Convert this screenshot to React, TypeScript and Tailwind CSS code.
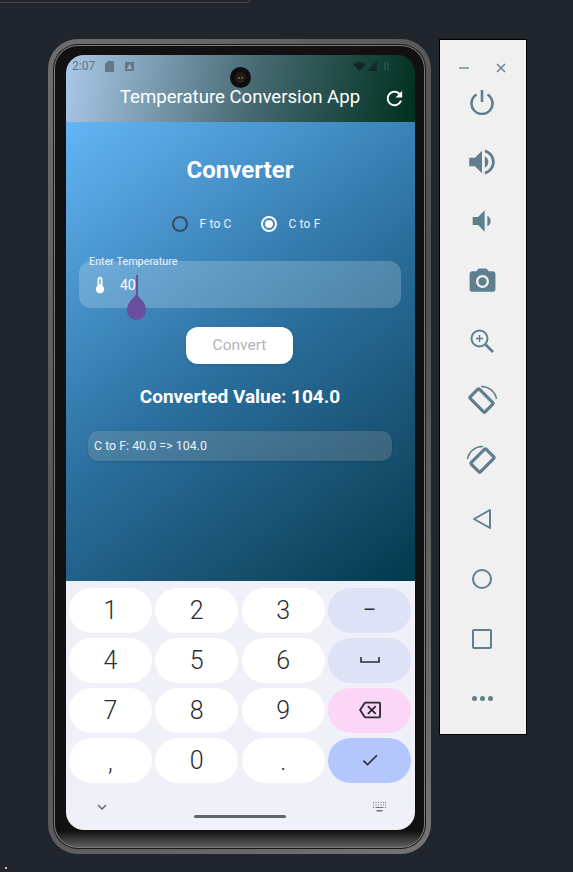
const font = { fontFamily: "Roboto, sans-serif" };

function Icon({ d, size = 24, className = "" }: { d: string; size?: number; className?: string }) {
  return (
    <svg width={size} height={size} viewBox="0 0 24 24" fill="currentColor" className={className}>
      <path d={d} />
    </svg>
  );
}

function Key({ label, className = "bg-white" }: { label?: string; className?: string }) {
  return (
    <div className={`flex h-[45.5px] items-center justify-center rounded-[23px] text-[25px] font-[350] text-[#2b2c33] ${className}`}>
      {label}
    </div>
  );
}

function Keyboard() {
  return (
    <div className="flex h-[249px] flex-col bg-[#f0f0f8] pt-[6.5px]">
      <div className="grid grid-cols-4 gap-x-[3.8px] gap-y-[4.5px] pl-[3px] pr-[4px]">
        <Key label="1" />
        <Key label="2" />
        <Key label="3" />
        <div className="flex h-[45.5px] items-center justify-center rounded-[23px] bg-[#dde2f7] text-[20px] font-normal text-[#2b2c33]">–</div>
        <Key label="4" />
        <Key label="5" />
        <Key label="6" />
        <div className="flex h-[45.5px] items-center justify-center rounded-[23px] bg-[#dde2f7]">
          <svg width="20" height="8" viewBox="0 0 20 8" fill="none" stroke="#2b2c33" strokeWidth="1.6">
            <path d="M1 1v5h18V1" />
          </svg>
        </div>
        <Key label="7" />
        <Key label="8" />
        <Key label="9" />
        <div className="flex h-[45.5px] items-center justify-center rounded-[23px] bg-[#fcd6f6] text-[#2b2c33]">
          <Icon size={22} d="M22 3H7c-.69 0-1.23.35-1.59.88L0 12l5.41 8.11c.36.53.9.89 1.59.89h15c1.1 0 2-.9 2-2V5c0-1.1-.9-2-2-2zm0 16H7.07L2.4 12l4.66-7H22v14zm-11.59-2L14 13.41 17.59 17 19 15.59 15.41 12 19 8.41 17.59 7 14 10.59 10.41 7 9 8.41 12.59 12 9 15.59z" />
        </div>
        <Key label="," className="bg-white pt-[3px]" />
        <Key label="0" />
        <Key label="." className="bg-white pt-[3px]" />
        <div className="flex h-[45.5px] items-center justify-center rounded-[23px] bg-[#b4c7fd] text-[#2b2c33]">
          <Icon size={20} d="M9 16.17L4.83 12l-1.42 1.41L9 19 21 7l-1.41-1.41z" />
        </div>
      </div>
      <div className="flex items-center justify-between pl-[30px] pr-[28px] pt-[19px]">
        <svg width="12" height="8" viewBox="0 0 12 8" fill="none" stroke="#5c5f68" strokeWidth="1.3">
          <path d="M2 2l4 4 4-4" />
        </svg>
        <svg width="15" height="10" viewBox="0 0 15 10" fill="#6f727a">
          <path d="M1 0h1v1H1zM3.500 0h1v1h-1zM6 0h1v1H6zM8.500 0h1v1h-1zM11 0h1v1h-1zM13 0h1v1h-1zM1 2.500h1v1H1zM3.500 2.500h1v1h-1zM6 2.500h1v1H6zM8.500 2.500h1v1h-1zM11 2.500h1v1h-1zM13 2.500h1v1h-1zM1 5h1v1H1zM3.500 5h8v1h-8zM13 5h1v1h-1zM4.500 8h6v1.500h-6z" />
        </svg>
      </div>
      <div className="ml-[128px] mt-[3px] h-[3px] w-[92px] rounded-full bg-[#64656c]" />
    </div>
  );
}

function AppBar() {
  return (
    <div className="relative h-[67px] bg-[linear-gradient(100deg,#aac8e8_0%,#44686f_55%,#00301f_100%)]">
      <div className="flex h-[21px] items-center justify-between pl-[6px] pr-[25px] pt-[1px] text-[#62778a]">
        <div className="flex items-center gap-[10px]">
          <span className="text-[12px]">2:07</span>
          <svg width="9" height="11" viewBox="0 0 9 11" fill="currentColor">
            <path d="M3 0h5a1 1 0 0 1 1 1v9a1 1 0 0 1-1 1H1a1 1 0 0 1-1-1V3z" />
          </svg>
          <svg width="9" height="9" viewBox="0 0 9 9" className="ml-[1px]">
            <path d="M0 0h9v9H0z" fill="currentColor" />
            <path d="M4.500 1.500L7 7H2z" fill="#b0c4d4" opacity="0.7" />
          </svg>
        </div>
        <div className="flex items-center gap-[1px] text-[#0d2a2c]">
          <svg width="13" height="9" viewBox="0 0 14 10" fill="currentColor">
            <path d="M0 2.500Q7-2.500 14 2.500L7 10z" />
          </svg>
          <svg width="10" height="10" viewBox="0 0 10 10" fill="currentColor">
            <path d="M10 0v10H0z" />
          </svg>
          <svg width="7" height="10" viewBox="0 0 7 10" fill="#24504c" className="ml-[5px]">
            <path d="M1 1h2v8H1zM4 1h2v8H4z" />
          </svg>
        </div>
      </div>
      <div className="relative flex h-[46px] items-center justify-center pb-[3px] pr-[1px]">
        <h2 className="text-[18.6px] leading-none text-white">Temperature Conversion App</h2>
        <Icon size={23} className="absolute right-[9.5px] top-[10.5px] text-white" d="M17.65 6.35C16.2 4.900 14.210 4 12 4c-4.420 0-7.990 3.580-7.990 8s3.570 8 7.990 8c3.730 0 6.840-2.550 7.730-6h-2.080c-.82 2.330-3.040 4-5.650 4-3.310 0-6-2.690-6-6s2.690-6 6-6c1.660 0 3.140.69 4.220 1.780L13 11h7V4l-2.350 2.350z" />
      </div>
      {/* punch-hole camera */}
      <div className="absolute left-[164px] top-[12px] flex h-[21px] w-[21px] items-center justify-center rounded-full bg-[#0e0e10]">
        <div className="flex h-[11px] w-[11px] items-center justify-center gap-[1px] rounded-full bg-[#221d18]">
          <div className="h-[2px] w-[2px] rounded-full bg-[#8a6a2c]" />
          <div className="h-[2px] w-[2px] rounded-full bg-[#8a6a2c]" />
        </div>
      </div>
    </div>
  );
}

function Radio({ label, selected }: { label: string; selected?: boolean }) {
  return (
    <div className="flex items-center gap-[12px]">
      {selected ? (
        <div className="flex h-[16px] w-[16px] items-center justify-center rounded-full border-2 border-white">
          <div className="h-[8px] w-[8px] rounded-full bg-white" />
        </div>
      ) : (
        <div className="h-[16px] w-[16px] rounded-full border-2 border-[#3f4a5e]" />
      )}
      <span className="text-[12px] leading-none tracking-[0.15px] text-white/90">{label}</span>
    </div>
  );
}

function Converter() {
  return (
    <div className="flex h-[459px] flex-col bg-[linear-gradient(143deg,#64b5f6_0%,#2b709f_50%,#174f6e_80%,#003a4c_100%)] pr-[1px] text-white">
      <h1 className="mt-[33px] text-center text-[24px] font-bold leading-[30px]">Converter</h1>
      <div className="mt-[31px] flex h-[16px] justify-center gap-[29px] pl-[12px]">
        <Radio label="F to C" />
        <Radio label="C to F" selected />
      </div>
      <div className="relative mx-[13px] mt-[29px] flex h-[47px] items-center rounded-[12px] bg-white/20 pl-[11px]">
        <span className="absolute left-[10px] top-[-6px] text-[10.8px] leading-[13px] text-white/90">Enter Temperature</span>
        <Icon size={20} className="text-white" d="M15 13V5c0-1.660-1.340-3-3-3S9 3.340 9 5v8c-1.210.91-2 2.370-2 4 0 2.760 2.240 5 5 5s5-2.240 5-5c0-1.630-.79-3.090-2-4zm-4-8c0-.55.45-1 1-1s1 .45 1 1h-1v1h1v2h-1v1h1v2h-2V5z" />
        <span className="ml-[10px] text-[14px] leading-none">40</span>
        {/* text cursor and its drag handle */}
        <div className="absolute left-[57px] top-[14px] h-[26px] w-[1.500px] bg-[#6a4ea0]" />
        <svg width="19" height="27" viewBox="0 0 19 27" className="absolute left-[47.500px] top-[32px]" fill="#6a4ea0">
          <path d="M9.500 0C11 5 19 8 19 17.500A9.500 9.500 0 0 1 0 17.500C0 8 8 5 9.500 0z" />
        </svg>
      </div>
      <button className="ml-[120px] mt-[19px] block h-[37px] w-[107px] rounded-[12px] bg-white pt-[1px] text-[15.5px] text-[#b3b3b8] shadow-sm">
        Convert
      </button>
      <p className="mt-[21px] text-center text-[19px] font-bold leading-[24px]">Converted Value: 104.0</p>
      <div className="mx-[22px] mt-[22px] flex h-[30px] items-center rounded-[10px] bg-[#c8c0b8]/20 pl-[6px] text-[12.4px] text-white/90 shadow-sm">
        C to F: 40.0 =&gt; 104.0
      </div>
    </div>
  );
}

function Phone() {
  return (
    <div className="h-[815px] w-[383px] shrink-0 rounded-[30px] bg-[linear-gradient(135deg,#6e6e6e,#4e4e4e_50%,#757575)] p-[5px]">
      <div className="h-full rounded-[25px] bg-[#1a1a1a] p-[1px]">
        <div className="h-full rounded-[24px] bg-[#7a7a7a] p-[1px]">
          <div className="h-full rounded-[23px] bg-[linear-gradient(180deg,#111111_98%,#5e5e5e_100%)] pb-[17px] pl-[11px] pr-[9px] pt-[9px]">
            <div className="h-[775px] overflow-hidden rounded-[18px]">
              <AppBar />
              <Converter />
              <Keyboard />
            </div>
          </div>
        </div>
      </div>
    </div>
  );
}

function Tool({ children }: { children: React.ReactNode }) {
  return <div className="flex h-[59.600px] items-center justify-center pr-[2px] text-[#5f7f8e]">{children}</div>;
}

function RotateIcon({ flip }: { flip?: boolean }) {
  return (
    <svg width="34" height="34" viewBox="0 0 34 34" fill="none" stroke="currentColor" className={flip ? "-scale-x-100" : ""}>
      <rect x="6" y="11" width="21" height="13" rx="1" strokeWidth="3.2" transform="rotate(45 16.500 17.500)" />
      <path d="M16 3.500A15 15 0 0 1 31.500 16" strokeWidth="1.600" />
    </svg>
  );
}

function EmulatorPanel() {
  return (
    <div className="ml-[8px] h-[696px] w-[88px] shrink-0 border border-black bg-[#f0f0f0]">
      <div className="flex h-[32.500px] items-end justify-between pl-[19px] pr-[20px] text-[#5f7f8e]">
        <svg width="10" height="10" viewBox="0 0 10 10" stroke="currentColor" strokeWidth="1.300">
          <path d="M0 5h10" />
        </svg>
        <svg width="10" height="10" viewBox="0 0 10 10" stroke="currentColor" strokeWidth="1.300">
          <path d="M1 1l8 8M9 1l-8 8" />
        </svg>
      </div>
      <Tool>
        <svg width="26" height="26" viewBox="0 0 26 26" fill="none" stroke="currentColor" strokeWidth="2.600">
          <path d="M13 1v12M7.500 5.500a10.500 10.500 0 1 0 11 0" />
        </svg>
      </Tool>
      <Tool>
        <Icon size={34} d="M3 9v6h4l5 5V4L7 9H3zm13.500 3c0-1.770-1.020-3.290-2.500-4.030v8.050c1.480-.73 2.500-2.250 2.500-4.020zM14 3.230v2.060c2.890.86 5 3.540 5 6.710s-2.110 5.850-5 6.710v2.060c4.010-.91 7-4.490 7-8.770s-2.990-7.860-7-8.770z" />
      </Tool>
      <Tool>
        <Icon size={32} d="M18.500 12c0-1.770-1.020-3.290-2.500-4.030v8.050c1.480-.73 2.500-2.250 2.500-4.020zM5 9v6h4l5 5V4L9 9H5z" />
      </Tool>
      <Tool>
        <svg width="31" height="31" viewBox="0 0 24 24" fill="currentColor">
          <path d="M9 2L7.170 4H4c-1.100 0-2 .9-2 2v12c0 1.100.9 2 2 2h16c1.100 0 2-.9 2-2V6c0-1.100-.9-2-2-2h-3.170L15 2H9zm3 15c-2.760 0-5-2.240-5-5s2.240-5 5-5 5 2.240 5 5-2.240 5-5 5z" />
          <circle cx="12" cy="12" r="3.200" />
        </svg>
      </Tool>
      <Tool>
        <svg width="26" height="26" viewBox="0 0 26 26" fill="none" stroke="currentColor" strokeWidth="2">
          <circle cx="10.500" cy="10.500" r="8" />
          <path d="M16.500 16.500l7.500 7.500" strokeWidth="2.600" />
          <path d="M10.500 7v7M7 10.500h7" strokeWidth="1.400" />
        </svg>
      </Tool>
      <Tool>
        <RotateIcon />
      </Tool>
      <Tool>
        <RotateIcon flip />
      </Tool>
      <Tool>
        <svg width="20" height="22" viewBox="0 0 20 22" fill="none" stroke="currentColor" strokeWidth="2" strokeLinejoin="round">
          <path d="M18 2v18L2 11z" />
        </svg>
      </Tool>
      <Tool>
        <div className="h-[20px] w-[20px] rounded-full border-2 border-[#5f7f8e]" />
      </Tool>
      <Tool>
        <div className="h-[20px] w-[20px] rounded-[2px] border-2 border-[#5f7f8e]" />
      </Tool>
      <Tool>
        <div className="flex gap-[3px]">
          <div className="h-[5px] w-[5px] rounded-full bg-[#5f7f8e]" />
          <div className="h-[5px] w-[5px] rounded-full bg-[#5f7f8e]" />
          <div className="h-[5px] w-[5px] rounded-full bg-[#5f7f8e]" />
        </div>
      </Tool>
    </div>
  );
}

export default function App() {
  return (
    <div className="relative h-[872px] w-[573px] overflow-hidden bg-[#21252e]" style={font}>
      <div className="h-[3px] w-[250px] rounded-br-[4px] border-b border-r border-[#44474d]" />
      <div className="flex pl-[48px] pt-[36px]">
        <Phone />
        <EmulatorPanel />
      </div>
      <div className="absolute bottom-[3px] left-[5px] h-[2px] w-[2px] bg-white/70" />
    </div>
  );
}
